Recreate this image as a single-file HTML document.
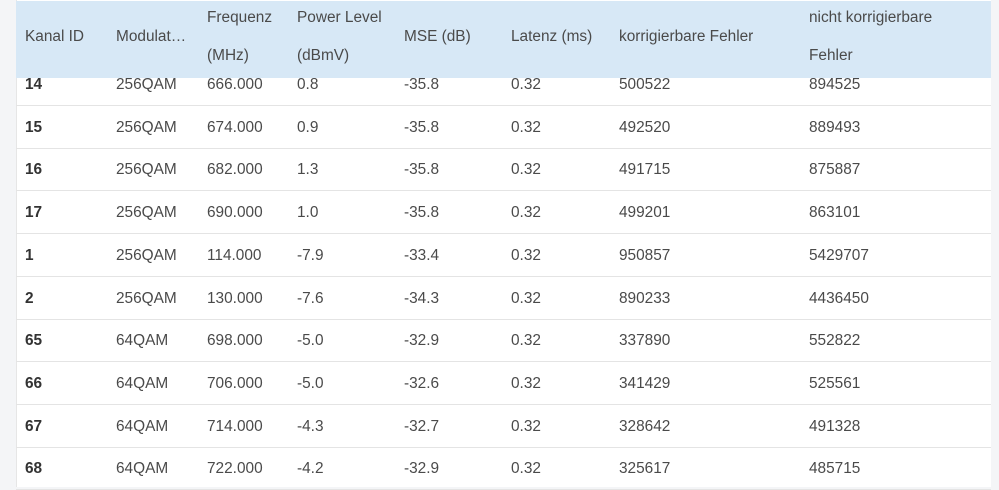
<!DOCTYPE html>
<html><head><style>
body{margin:0;width:999px;height:487px;overflow:hidden;background:#f4f5f7;font-family:"Liberation Sans",sans-serif;font-size:15.4px;color:#4a4a4a;position:relative}
.tbl{position:absolute;left:16px;top:0;width:974px;height:487px;background:#fff;border-left:1px solid #e6e6e6}
.hd{position:absolute;left:16px;top:1px;width:975px;height:77px;background:#d7e8f6}
.t{position:absolute;white-space:nowrap;line-height:16px}
.b{font-weight:bold;color:#333}
.ln{position:absolute;left:16px;width:975px;height:1px;background:#e4e4e4}
</style></head><body>
<div class="tbl"></div>
<div class="hd"></div>
<div class="t" style="left:25px;top:29px">Kanal ID</div>
<div class="t" style="left:116px;top:29px">Modulat…</div>
<div class="t" style="left:207px;top:10px">Frequenz</div>
<div class="t" style="left:207px;top:48px">(MHz)</div>
<div class="t" style="left:297px;top:10px">Power Level</div>
<div class="t" style="left:297px;top:48px">(dBmV)</div>
<div class="t" style="left:404px;top:29px">MSE (dB)</div>
<div class="t" style="left:511px;top:29px">Latenz (ms)</div>
<div class="t" style="left:619px;top:29px">korrigierbare Fehler</div>
<div class="t" style="left:809px;top:10px">nicht korrigierbare</div>
<div class="t" style="left:809px;top:48px">Fehler</div>
<div id="rows"></div>
<script>
var d=[["14","256QAM","666.000","0.8","-35.8","500522","894525"],["15","256QAM","674.000","0.9","-35.8","492520","889493"],["16","256QAM","682.000","1.3","-35.8","491715","875887"],["17","256QAM","690.000","1.0","-35.8","499201","863101"],["1","256QAM","114.000","-7.9","-33.4","950857","5429707"],["2","256QAM","130.000","-7.6","-34.3","890233","4436450"],["65","64QAM","698.000","-5.0","-32.9","337890","552822"],["66","64QAM","706.000","-5.0","-32.6","341429","525561"],["67","64QAM","714.000","-4.3","-32.7","328642","491328"],["68","64QAM","722.000","-4.2","-32.9","325617","485715"]];
var xs=[25,116,207,297,404,619,809],h="";
d.forEach(function(r,i){var y=77+i*42.7;
r.forEach(function(v,j){h+='<div class="t'+(j==0?' b':'')+'" style="left:'+xs[j]+'px;top:'+y+'px">'+v+'</div>';});
h+='<div class="t" style="left:511px;top:'+y+'px">0.32</div>';
h+='<div class="ln" style="top:'+(105+i*42.7)+'px"></div>';});
document.getElementById('rows').innerHTML=h;
</script>
</body></html>
